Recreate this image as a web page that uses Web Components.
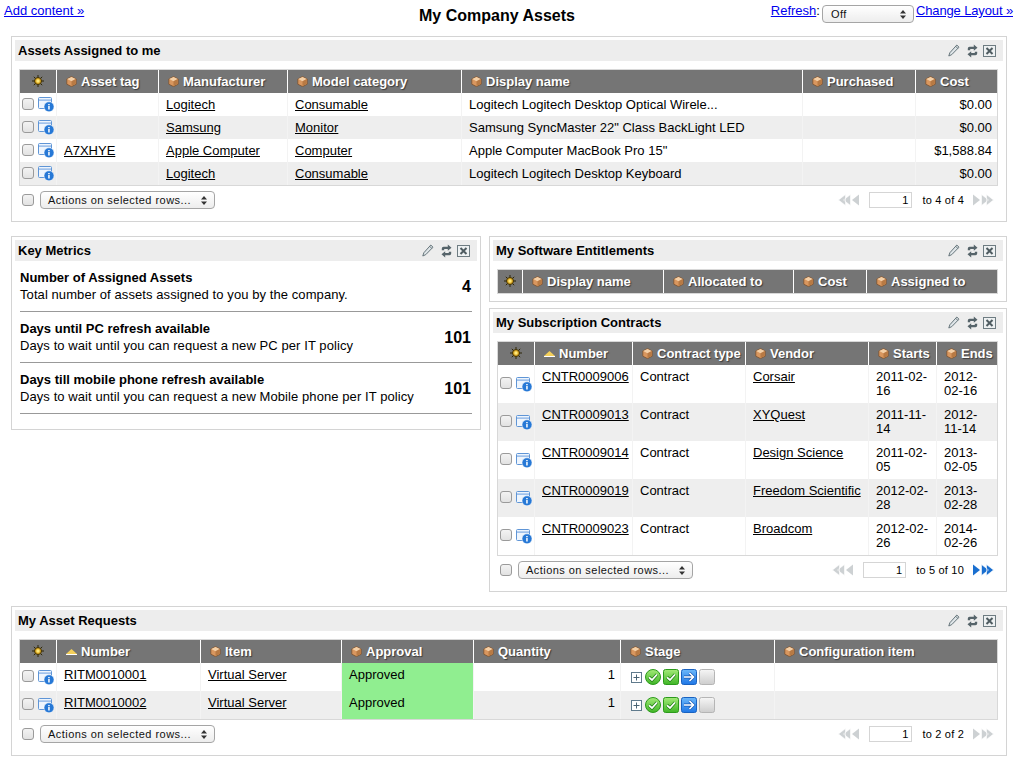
<!DOCTYPE html>
<html>
<head>
<meta charset="utf-8">
<title>My Company Assets</title>
<style>
  body { margin: 0; background: #fff; color: #000; font: 13px "Liberation Sans", Arial, sans-serif; }
  .page { display: flex; flex-direction: column; gap: 14px; padding: 0 14px 0 11px; }
  .middle { display: grid; grid-template-columns: 470px 518px; gap: 8px; align-items: start; }
  .stack { display: flex; flex-direction: column; gap: 6px; }
</style>
</head>
<body>
<top-bar heading="My Company Assets"></top-bar>
<div class="page">
  <dash-panel heading="Assets Assigned to me">
    <data-table id="assets"></data-table>
    <table-footer from="1" summary="to 4 of 4"></table-footer>
  </dash-panel>
  <div class="middle">
    <dash-panel heading="Key Metrics">
      <metric-list>
        <metric-row value="4" label="Number of Assigned Assets" text="Total number of assets assigned to you by the company."></metric-row>
        <metric-row value="101" label="Days until PC refresh available" text="Days to wait until you can request a new PC per IT policy"></metric-row>
        <metric-row value="101" label="Days till mobile phone refresh available" text="Days to wait until you can request a new Mobile phone per IT policy"></metric-row>
      </metric-list>
    </dash-panel>
    <div class="stack">
      <dash-panel heading="My Software Entitlements">
        <data-table id="software"></data-table>
      </dash-panel>
      <dash-panel heading="My Subscription Contracts">
        <data-table id="contracts"></data-table>
        <table-footer from="1" summary="to 5 of 10" more></table-footer>
      </dash-panel>
    </div>
  </div>
  <dash-panel heading="My Asset Requests">
    <data-table id="requests"></data-table>
    <table-footer from="1" summary="to 2 of 2"></table-footer>
  </dash-panel>
</div>

<script>
const tick = `<path d="M4 8.300 7 11l5-5.500" fill="none" stroke="#1f7d14" stroke-width="3.200"/><path d="M4 8.300 7 11l5-5.500" fill="none" stroke="#fff" stroke-width="1.800"/>`;
const stageDefs = `<defs>
  <linearGradient id="sg" x2="0" y2="1"><stop offset="0" stop-color="#a4ea78"/><stop offset="1" stop-color="#3fb526"/></linearGradient>
  <linearGradient id="sb" x2="0" y2="1"><stop offset="0" stop-color="#6cb8fa"/><stop offset="1" stop-color="#1f77e6"/></linearGradient>
  <linearGradient id="sp" x2="0" y2="1"><stop offset="0" stop-color="#f6f6f6"/><stop offset="1" stop-color="#cdcdcd"/></linearGradient>
</defs>`;

const icons = {
  cube: `<svg width="11" height="11" viewBox="0 0 11 11"><path d="M5.500.6 10.200 3v5.200L5.500 10.600.8 8.200V3z" fill="#d9975f" stroke="#7a5230" stroke-width=".8" stroke-linejoin="round"/><path d="M1.200 3.100 5.500 5.300 9.800 3.100 5.500 1z" fill="#f3cfa6"/><path d="M5.500 5.300v4.800L9.800 7.900V3.100z" fill="#b87a44"/></svg>`,
  gear: `<svg width="12" height="12" viewBox="0 0 12 12"><g stroke="#2e2708" stroke-width="1"><path d="M6 0v12M0 6h12M1.800 1.800l8.400 8.400M10.200 1.800l-8.400 8.400"/></g><circle cx="6" cy="6" r="3.500" fill="#d9a520" stroke="#3d3008"/><circle cx="6" cy="6" r="1.700" fill="#ffe97a"/></svg>`,
  sort: `<svg width="11" height="6" viewBox="0 0 11 6"><path d="M5.500 0 11 5H0z" fill="#f3cf5a"/><path d="M0 5h11v1H0z" fill="#fff"/></svg>`,
  info: `<svg width="16" height="15" viewBox="0 0 16 15"><rect x=".5" y=".5" width="13" height="11" rx="1" fill="#eef5fd" stroke="#5f95d6"/><path d="M1 2.500h12v1.200H1z" fill="#7fabe2"/><circle cx="11" cy="9.800" r="5" fill="#2678d6" stroke="#fff" stroke-width=".5"/><path d="M10.200 8.900h1.500v3.600h-1.500zM10.200 6.900h1.500v1.300h-1.500z" fill="#fff"/></svg>`,
  pencil: `<svg width="12" height="13" viewBox="0 0 12 13"><path d="M8.800 1 11 3.200 3.800 10.600.8 12l1-3.200z" fill="#dfe5e8" stroke="#66757b"/><path d="M7.600 2.200 9.800 4.400" stroke="#66757b"/></svg>`,
  refresh: `<svg width="11" height="14" viewBox="0 0 11 14"><path d="M.8 6.200V4.600A1.800 1.800 0 0 1 2.600 2.800H6.800V.6l3.700 3.100-3.700 3.100V4.900H3.200v1.300z" fill="#56646a"/><path d="M10.200 7.800v1.600a1.800 1.800 0 0 1-1.800 1.800H4.200v2.200L.5 10.300l3.700-3.100v1.900h3.600V7.800z" fill="#56646a"/></svg>`,
  close: `<svg width="13" height="12" viewBox="0 0 13 12"><rect x=".5" y=".5" width="12" height="11" fill="#eef1f2" stroke="#6e7c82"/><path d="M3.500 3 9.500 9M9.500 3 3.500 9" stroke="#4f5c61" stroke-width="2"/></svg>`,
  back: c => `<svg width="22" height="12" viewBox="0 0 22 12"><path d="M7.500 .5v11L.5 6zM12.500 .5v11L5.500 6z" fill="${c}" stroke="#fff" stroke-width=".6"/><path d="M21 .5v11L14 6z" fill="${c}"/></svg>`,
  next: c => `<svg width="22" height="12" viewBox="0 0 22 12"><path d="M1 .5v11L8 6z" fill="${c}"/><path d="M9.500 .5v11l7-5.500zM14.500 .5v11l7-5.500z" fill="${c}" stroke="#fff" stroke-width=".6"/></svg>`,
  plus: `<svg width="11" height="11" viewBox="0 0 11 11"><rect x=".5" y=".5" width="10" height="10" fill="#fff" stroke="#5f7a8c"/><path d="M2.500 5.500h6M5.500 2.500v6" stroke="#4a6474"/></svg>`,
  done: `<svg width="16" height="16" viewBox="0 0 16 16">${stageDefs}<circle cx="8" cy="8" r="7.500" fill="url(#sg)" stroke="#2c9a1c"/>${tick}</svg>`,
  check: `<svg width="16" height="16" viewBox="0 0 16 16"><rect x=".5" y=".5" width="15" height="15" rx="2" fill="url(#sg)" stroke="#2c9a1c"/>${tick}</svg>`,
  arrow: `<svg width="16" height="16" viewBox="0 0 16 16"><rect x=".5" y=".5" width="15" height="15" rx="2" fill="url(#sb)" stroke="#1a62c0"/><path d="M3 8h9M8.500 4l4 4-4 4" fill="none" stroke="#1456b0" stroke-width="3"/><path d="M3 8h9M8.500 4l4 4-4 4" fill="none" stroke="#fff" stroke-width="1.700"/></svg>`,
  pending: `<svg width="16" height="16" viewBox="0 0 16 16"><rect x=".5" y=".5" width="15" height="15" rx="2" fill="url(#sp)" stroke="#b5b5b5"/></svg>`
};

const checkboxCss = `
  .check { display: inline-block; flex: none; box-sizing: border-box; width: 12px; height: 12px; border: 1px solid #9a9a9a; border-radius: 3px; background: linear-gradient(#f3f3f3, #e2e2e2); vertical-align: middle; }
`;

class SelectBox extends HTMLElement {
  constructor() {
    super();
    this.attachShadow({mode: 'open'}).innerHTML = `
      <style>
        :host { display: inline-flex; box-sizing: border-box; height: 18px; align-items: center; justify-content: space-between; padding: 0 7px 0 7px; border: 1px solid #a5a5a5; border-radius: 4px; background: linear-gradient(#fff, #ededed); font: 11px "Liberation Sans", Arial, sans-serif; color: #111; letter-spacing: .45px; }
        svg { display: block; }
      </style>
      <slot></slot>
      <svg width="6" height="9" viewBox="0 0 6 9"><path d="M3 0 6 3.500H0zM3 9 0 5.500h6z" fill="#333"/></svg>`;
  }
}

class TopBar extends HTMLElement {
  constructor() {
    super();
    this.attachShadow({mode: 'open'});
  }
  connectedCallback() {
    this.shadowRoot.innerHTML = `
      <style>
        :host { display: flex; box-sizing: border-box; height: 36px; padding: 3px 8px 0 4px; font-size: 13px; align-items: flex-start; }
        a { color: #00e; }
        .left { flex: 0 0 415px; }
        h1 { margin: 4px 0 0; font-size: 16px; line-height: 18px; }
        .right { margin-left: auto; display: flex; align-items: flex-start; }
        select-box { width: 92px; margin: 2px 2px 0 2px; padding-left: 8px; }
        .layout { letter-spacing: -.13px; }
      </style>
      <div class="left"><a href="#">Add content »</a></div>
      <h1>${this.getAttribute('heading')}</h1>
      <div class="right"><a href="#">Refresh</a><span>:</span><select-box>Off</select-box><a class="layout" href="#">Change Layout »</a></div>`;
  }
}

class DashPanel extends HTMLElement {
  constructor() {
    super();
    this.attachShadow({mode: 'open'});
  }
  connectedCallback() {
    this.shadowRoot.innerHTML = `
      <style>
        :host { display: block; box-sizing: border-box; border: 1px solid #d4d4d4; padding: 3px; background: #fff; }
        header { display: flex; align-items: center; height: 21px; padding: 0 7px 0 3px; background: #ededed; }
        h2 { flex: 1; margin: 0; font-size: 13px; line-height: 21px; }
        .tools { display: flex; align-items: center; gap: 6px; }
        .tools svg:nth-child(2) { margin-left: 1px; margin-right: -1px; }
        svg { display: block; }
      </style>
      <header>
        <h2>${this.getAttribute('heading')}</h2>
        <div class="tools">${icons.pencil}${icons.refresh}${icons.close}</div>
      </header>
      <slot></slot>`;
  }
}

class DataTable extends HTMLElement {
  constructor() {
    super();
    this.attachShadow({mode: 'open'});
  }
  set config(c) {
    const cols = c.cols.map(w => `<col style="width:${w[1]}px">`).join('');
    const head = c.cols.map((w, i) => i == 0
      ? `<th class="first">${icons.gear}</th>`
      : `<th><span class="label">${w[2] ? icons.sort : icons.cube}${w[0]}</span></th>`).join('');
    const rows = (c.rows || []).map(r => `
      <tr style="height:${c.rowHeight}px">
        <td class="first"><span class="pick"><span class="check"></span>${icons.info}</span></td>
        ${r.map(v => this.cell(v)).join('')}
      </tr>`).join('');
    this.shadowRoot.innerHTML = `
      <style>
        :host { display: block; margin: 8px 5px 0 4px; }
        :host(:last-child) { margin-bottom: 4px; }
        ${checkboxCss}
        table { width: 100%; table-layout: fixed; border-collapse: separate; border-spacing: 0; border: 1px solid #d8d8d8; }
        th { height: 23px; padding: 0 0 0 9px; background: #757575; border-left: 1px solid #fff; color: #fff; font-size: 13px; font-weight: bold; text-align: left; white-space: nowrap; overflow: hidden; text-shadow: 1px 1px 1px #3c3c3c; }
        th.first { padding: 0; border-left: 0; }
        th.first svg { display: block; margin: 0 auto 2px; }
        .label { display: flex; align-items: center; gap: 4px; }
        .label svg { flex: none; }
        td { padding: 5px 4px 2px 7px; border-left: 1px solid #f3f3f3; line-height: 14px; vertical-align: top; font-size: 13px; }
        tr:nth-child(even) td { background: #eee; }
        td.first { padding: 0 0 0 2px; border-left: 0; vertical-align: middle; }
        .pick { display: flex; align-items: center; gap: 4px; }
        .pick svg { flex: none; }
        .pick .check { margin-bottom: 2px; }
        a { color: #000; }
        td.num { text-align: right; padding-right: 5px; }
        td.ok { background: #90ee90 !important; }
        .stage { display: flex; align-items: center; gap: 2px; margin: 1px 0 0 3px; }
        .stage svg { display: block; flex: none; }
        .stage svg:first-child { margin-right: 1px; }
      </style>
      <table><colgroup>${cols}</colgroup><thead><tr>${head}</tr></thead><tbody>${rows}</tbody></table>`;
  }
  cell(v) {
    if (v === '') return '<td></td>';
    if (typeof v == 'string') return `<td>${v}</td>`;
    if (v.href) return `<td><a href="#">${v.href}</a></td>`;
    if (v.num) return `<td class="num">${v.num}</td>`;
    if (v.ok) return `<td class="ok">${v.ok}</td>`;
    return `<td><div class="stage">${icons.plus}${icons.done}${icons.check}${icons.arrow}${icons.pending}</div></td>`;
  }
}

class TableFooter extends HTMLElement {
  constructor() {
    super();
    this.attachShadow({mode: 'open'});
  }
  connectedCallback() {
    const on = this.hasAttribute('more') ? '#1a6fd0' : '#cdd1d3';
    this.shadowRoot.innerHTML = `
      <style>
        :host { display: flex; align-items: center; height: 18px; margin: 5px 4px 9px; padding: 0 5px 0 3px; font-size: 11px; }
        ${checkboxCss}
        select-box { width: 175px; margin-left: 6px; }
        .pager { margin-left: auto; display: flex; align-items: center; }
        .page-no { box-sizing: border-box; width: 43px; height: 16px; margin: 0 10px 0 9px; padding: 0 3px; border: 1px solid #d5d5d5; text-align: right; line-height: 15px; }
        .count { margin-right: 8px; white-space: nowrap; letter-spacing: .2px; }
        svg { display: block; }
      </style>
      <span class="check"></span>
      <select-box>Actions on selected rows...</select-box>
      <div class="pager">${icons.back('#cdd1d3')}<span class="page-no">${this.getAttribute('from')}</span><span class="count">${this.getAttribute('summary')}</span>${icons.next(on)}</div>`;
  }
}

class MetricList extends HTMLElement {
  constructor() {
    super();
    this.attachShadow({mode: 'open'}).innerHTML = `
      <style>:host { display: block; padding: 0 5px 12px; }</style>
      <slot></slot>`;
  }
}

class MetricRow extends HTMLElement {
  constructor() {
    super();
    this.attachShadow({mode: 'open'});
  }
  connectedCallback() {
    this.shadowRoot.innerHTML = `
      <style>
        :host { display: flex; box-sizing: border-box; height: 51px; align-items: center; justify-content: space-between; border-bottom: 1px solid #999; font-size: 13px; line-height: 17px; }
        span { letter-spacing: .08px; }
        b.value { font-size: 16px; margin-right: 1px; }
      </style>
      <div><b>${this.getAttribute('label')}</b><br><span>${this.getAttribute('text')}</span></div>
      <b class="value">${this.getAttribute('value')}</b>`;
  }
}

customElements.define('select-box', SelectBox);
customElements.define('top-bar', TopBar);
customElements.define('dash-panel', DashPanel);
customElements.define('data-table', DataTable);
customElements.define('table-footer', TableFooter);
customElements.define('metric-list', MetricList);
customElements.define('metric-row', MetricRow);

const a = href => ({href});
const n = num => ({num});
const d = s => s.replace(/-/g, '-<wbr>');

document.getElementById('assets').config = {
  rowHeight: 23,
  cols: [['', 36], ['Asset tag', 102], ['Manufacturer', 129], ['Model category', 174], ['Display name', 341], ['Purchased', 113], ['Cost', 82]],
  rows: [
    ['', a('Logitech'), a('Consumable'), 'Logitech Logitech Desktop Optical Wirele...', '', n('$0.00')],
    ['', a('Samsung'), a('Monitor'), 'Samsung SyncMaster 22" Class BackLight LED', '', n('$0.00')],
    [a('A7XHYE'), a('Apple Computer'), a('Computer'), 'Apple Computer MacBook Pro 15"', '', n('$1,588.84')],
    ['', a('Logitech'), a('Consumable'), 'Logitech Logitech Desktop Keyboard', '', n('$0.00')]
  ]
};
document.getElementById('software').config = {
  cols: [['', 24], ['Display name', 141], ['Allocated to', 130], ['Cost', 73], ['Assigned to', 131]]
};
document.getElementById('contracts').config = {
  rowHeight: 38,
  cols: [['', 36], ['Number', 98, true], ['Contract type', 113], ['Vendor', 123], ['Starts', 68], ['Ends', 61]],
  rows: [
    [a('CNTR0009006'), 'Contract', a('Corsair'), d('2011-02-16'), d('2012-02-16')],
    [a('CNTR0009013'), 'Contract', a('XYQuest'), d('2011-11-14'), d('2012-11-14')],
    [a('CNTR0009014'), 'Contract', a('Design Science'), d('2011-02-05'), d('2013-02-05')],
    [a('CNTR0009019'), 'Contract', a('Freedom Scientific'), d('2012-02-28'), d('2013-02-28')],
    [a('CNTR0009023'), 'Contract', a('Broadcom'), d('2012-02-26'), d('2014-02-26')]
  ]
};
document.getElementById('requests').config = {
  rowHeight: 28,
  cols: [['', 36], ['Number', 144, true], ['Item', 141], ['Approval', 132], ['Quantity', 147], ['Stage', 154], ['Configuration item', 223]],
  rows: [
    [a('RITM0010001'), a('Virtual Server'), {ok: 'Approved'}, n('1'), {stage: 1}, ''],
    [a('RITM0010002'), a('Virtual Server'), {ok: 'Approved'}, n('1'), {stage: 1}, '']
  ]
};
</script>
</body>
</html>
